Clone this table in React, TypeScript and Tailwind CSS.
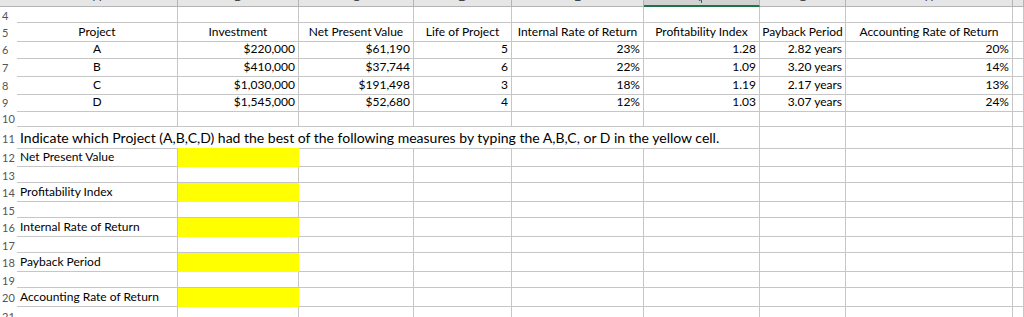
import React from "react";

const grid =
  "grid grid-cols-[17px_161px_121px_115px_98px_132px_116px_86px_167px_11px]";

const letters = ["A", "B", "C", "D", "E", "F", "G", "H", ""];

const headers = [
  "Project",
  "Investment",
  "Net Present Value",
  "Life of Project",
  "Internal Rate of Return",
  "Profitability Index",
  "Payback Period",
  "Accounting Rate of Return",
];

const projects = [
  ["A", "$220,000", "$61,190", "5", "23%", "1.28", "2.82 years", "20%"],
  ["B", "$410,000", "$37,744", "6", "22%", "1.09", "3.20 years", "14%"],
  ["C", "$1,030,000", "$191,498", "3", "18%", "1.19", "2.17 years", "13%"],
  ["D", "$1,545,000", "$52,680", "4", "12%", "1.03", "3.07 years", "24%"],
];

const measures = [
  "Net Present Value",
  "Profitability Index",
  "Internal Rate of Return",
  "Payback Period",
  "Accounting Rate of Return",
];

function RowNum({ n }: { n: number | string }) {
  return (
    <div className="flex items-center pl-[2px] text-[11px] text-[#555] leading-none">
      {n}
    </div>
  );
}

function Cell({
  children,
  align = "left",
  fill = false,
}: {
  children?: React.ReactNode;
  align?: "left" | "center" | "right";
  fill?: boolean;
}) {
  const a =
    align === "center" ? "justify-center" : align === "right" ? "justify-end" : "justify-start";
  return (
    <div
      className={`flex items-center ${a} px-[3px] whitespace-nowrap border-r border-b ${
        fill ? "bg-[#ffff00] border-[#ffff00]" : "border-[#c6c6c6]"
      }`}
    >
      {children}
    </div>
  );
}

function Blank({ n, h }: { n: number; h: string }) {
  return (
    <div className={`${grid} ${h}`}>
      <RowNum n={n} />
      {Array.from({ length: 9 }).map((_, i) => (
        <Cell key={i} />
      ))}
    </div>
  );
}

export default function App() {
  return (
    <div className="w-[1024px] h-[317px] overflow-hidden bg-white text-black text-[12px] font-['Lato','Liberation_Sans',sans-serif]">
      {/* column letters, cut off at the top */}
      <div className={`${grid} h-[7px] bg-[#e6e6e6]`}>
        <div className="border-b border-[#b4b4b4]" />
        {letters.map((l, i) => (
          <div
            key={i}
            className={`relative overflow-hidden flex justify-center border-r ${
              l === "F"
                ? "bg-[#d2d2d2] border-[#b4b4b4] border-b-2 border-b-[#217346]"
                : "border-b border-[#b4b4b4]"
            }`}
          >
            <span className="absolute -top-[9px] text-[12px] text-[#444] leading-none">{l}</span>
            {l === "F" && <span className="absolute top-0 w-px h-[3px] bg-[#217346]" />}
          </div>
        ))}
      </div>

      <Blank n={4} h="h-[16px]" />

      <div className={`${grid} h-[17px]`}>
        <RowNum n={5} />
        {headers.map((t) => (
          <Cell key={t} align="center">
            {t}
          </Cell>
        ))}
        <Cell />
      </div>

      {projects.map((p, r) => (
        <div
          key={p[0]}
          className={`${grid} ${r === 0 || r === 1 ? "h-[18px]" : "h-[17px]"}`}
        >
          <RowNum n={6 + r} />
          {p.map((v, i) => (
            <Cell key={i} align={i === 0 ? "center" : "right"}>
              {v}
            </Cell>
          ))}
          <Cell />
        </div>
      ))}

      <Blank n={10} h="h-[17px]" />

      <div className={`${grid} h-[21px]`}>
        <RowNum n={11} />
        <div className="col-span-6 flex items-center px-[3px] whitespace-nowrap text-[14px] border-r border-b border-[#c6c6c6]">
          Indicate which Project (A,B,C,D) had the best of the following measures by typing the
          A,B,C, or D in the yellow cell.
        </div>
        <Cell />
        <Cell />
        <Cell />
      </div>

      {measures.map((m, i) => (
        <React.Fragment key={m}>
          <div className={`${grid} h-[19px]`}>
            <RowNum n={12 + i * 2} />
            <Cell>{m}</Cell>
            <Cell fill />
            {Array.from({ length: 7 }).map((_, k) => (
              <Cell key={k} />
            ))}
          </div>
          {i < 4 && <Blank n={13 + i * 2} h="h-[16px]" />}
        </React.Fragment>
      ))}

      <Blank n={21} h="h-[18px]" />
    </div>
  );
}
